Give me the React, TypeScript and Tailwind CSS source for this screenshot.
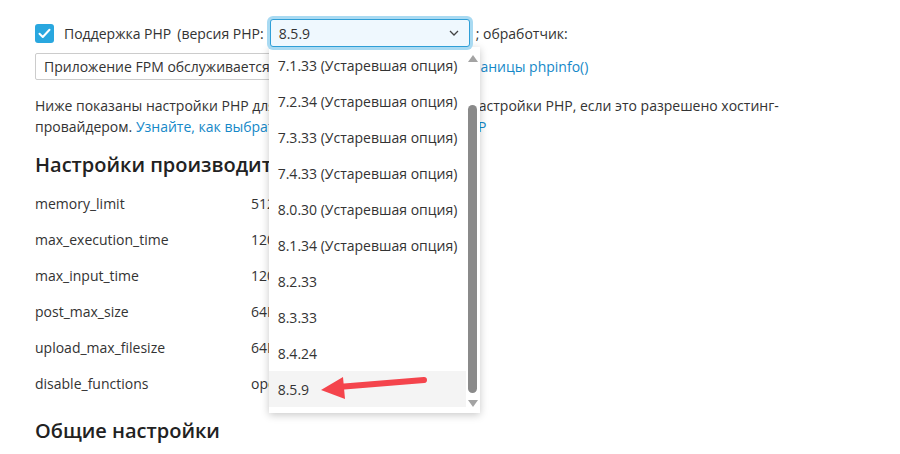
import React from "react";

const versions = [
  "7.1.33 (Устаревшая опция)",
  "7.2.34 (Устаревшая опция)",
  "7.3.33 (Устаревшая опция)",
  "7.4.33 (Устаревшая опция)",
  "8.0.30 (Устаревшая опция)",
  "8.1.34 (Устаревшая опция)",
  "8.2.33",
  "8.3.33",
  "8.4.24",
  "8.5.9",
];

const settings: [string, string][] = [
  ["memory_limit", "512M"],
  ["max_execution_time", "120"],
  ["max_input_time", "120"],
  ["post_max_size", "64M"],
  ["upload_max_filesize", "64M"],
  ["disable_functions", "opcache_get_status"],
];

function VersionList() {
  return (
    <div className="absolute left-[-1px] top-[28px] z-10 w-[211px] bg-white shadow-[0_2px_8px_rgba(0,0,0,0.22)] pb-[3px] flex">
      <ul className="flex-1">
        {versions.map((v) => (
          <li
            key={v}
            className={
              "h-[36px] flex items-center pl-[9px] text-[14px] text-[#333] whitespace-nowrap " +
              (v === "8.5.9" ? "bg-[#f4f4f4]" : "")
            }
          >
            {v}
          </li>
        ))}
      </ul>
      {/* scrollbar */}
      <div className="w-[14px] flex flex-col items-center pt-[8px] pb-[3px]">
        <div className="w-0 h-0 border-l-[5px] border-r-[5px] border-b-[7px] border-l-transparent border-r-transparent border-b-[#a3a3a3]" />
        <div className="mt-[43px] w-[9px] h-[288px] rounded-full bg-[#8a8a8a]" />
        <div className="mt-[7px] w-0 h-0 border-l-[5px] border-r-[5px] border-t-[7px] border-l-transparent border-r-transparent border-t-[#a3a3a3]" />
      </div>
    </div>
  );
}

export default function App() {
  return (
    <div
      className="relative w-[900px] h-[454px] overflow-hidden bg-white text-[14px] text-[#333]"
      style={{ fontFamily: "'Open Sans', 'Liberation Sans', sans-serif" }}
    >
      <div className="pl-[35px] pt-[19px]">
        {/* PHP support row */}
        <div className="flex items-center h-[28px]">
          <span className="w-[19px] h-[19px] rounded-[3px] bg-[#29a7df] flex items-center justify-center">
            <svg width="13" height="11" viewBox="0 0 13 11" fill="none">
              <path d="M1.5 5.8 L4.8 9 L11.5 1.8" stroke="white" strokeWidth="2" strokeLinecap="round" strokeLinejoin="round" />
            </svg>
          </span>
          <span className="ml-[10px]">Поддержка PHP</span>
          <span className="ml-[6px]">(версия PHP:</span>
          <div className="relative ml-[6px]">
            <div className="w-[200px] h-[28px] rounded-[3px] border border-[#2f9fd7] bg-[#eff8fe] ring-[3px] ring-[#a9daf2] flex items-center justify-between pl-[8px] pr-[10px] relative z-20">
              <span>8.5.9</span>
              <svg width="10" height="6" viewBox="0 0 10 6" fill="none">
                <path d="M1 1 L5 5 L9 1" stroke="#444" strokeWidth="1.3" />
              </svg>
            </div>
            <VersionList />
          </div>
          <span className="ml-[6px]">; обработчик:</span>
        </div>

        {/* handler row */}
        <div className="flex items-center mt-[6px]">
          <div className="w-[300px] h-[27px] border border-[#cccccc] rounded-[2px] flex items-center pl-[8px] whitespace-nowrap overflow-hidden">
            Приложение FPM обслуживается Apache
          </div>
          <a className="ml-[35px] text-[#1588c8] whitespace-nowrap">Сведения со страницы phpinfo()</a>
        </div>

        {/* description */}
        <p className="mt-[15px] leading-[21px] whitespace-nowrap">
          Ниже показаны настройки PHP для домена. Вы можете менять настройки PHP, если это разрешено хостинг-
          <br />
          провайдером. <a className="text-[#1588c8]">Узнайте, как выбрать версию и обработчик на PHP</a>
        </p>

        <h2 className="mt-[14px] text-[20px] leading-[28px] font-semibold text-[#222]">
          Настройки производительности
        </h2>

        <div className="mt-[6px] grid grid-cols-[216px_1fr]">
          {settings.map(([k, v]) => (
            <React.Fragment key={k}>
              <div className="h-[36px] flex items-center">{k}</div>
              <div className="h-[36px] flex items-center">{v}</div>
            </React.Fragment>
          ))}
        </div>

        <h2 className="mt-[16px] text-[20px] leading-[28px] font-semibold text-[#222]">Общие настройки</h2>
      </div>

      {/* pointer arrow */}
      <svg className="absolute left-0 top-0 z-30 pointer-events-none" width="900" height="454">
        <line x1="424" y1="380" x2="338" y2="387" stroke="#f4444c" strokeWidth="6" strokeLinecap="round" />
        <polygon points="321,390 343,377 345,399" fill="#f4444c" />
      </svg>
    </div>
  );
}
